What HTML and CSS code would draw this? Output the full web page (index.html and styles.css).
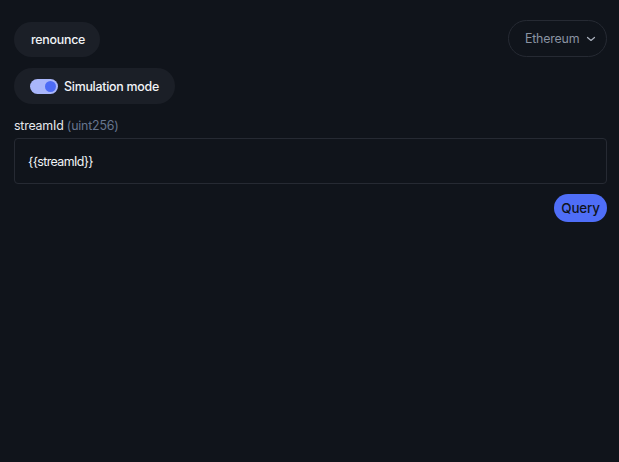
FILE: index.html
```html
<!DOCTYPE html>
<html>
<head>
<meta charset="utf-8">
<link rel="stylesheet" href="styles.css">
</head>
<body>
<div class="page">
  <div class="top">
    <div class="left">
      <button class="pill">renounce</button>
      <div class="pill sim">
        <span class="toggle"><span class="knob"></span></span>
        <span>Simulation mode</span>
      </div>
    </div>
    <button class="chain"><span>Ethereum</span>
      <svg width="10" height="10" viewBox="0 0 10 10"><path d="M1.5 3.5 L5 6.5 L8.5 3.5" fill="none" stroke="#aab1bd" stroke-width="1.2" stroke-linecap="round" stroke-linejoin="round"/></svg>
    </button>
  </div>
  <label class="label">streamId <span class="type">(uint256)</span></label>
  <div class="input">{{streamId}}</div>
  <div class="actions"><button class="query">Query</button></div>
</div>
</body>
</html>
```
FILE: styles.css
```css
html, body { margin: 0; padding: 0; background: #10141b; }
body { font-family: Inter, "Noto Sans", sans-serif; color: #f2f4f7; }
.page { padding: 20px 12px 0 14px; }
.top { display: flex; justify-content: space-between; align-items: flex-start; }
.left { display: flex; flex-direction: column; align-items: flex-start; gap: 11px; padding-top: 2px; }
.pill {
  background: #1b1f27; border: none; color: #f2f4f7; font-family: inherit;
  font-size: 12.4px; font-weight: 500; height: 35px; border-radius: 18px;
  padding: 0 15px 0 17px; display: flex; align-items: center; letter-spacing: -0.25px;
}
.sim { height: 36px; padding: 0 16px; gap: 6px; }
.toggle { width: 28px; height: 15px; border-radius: 8px; background: #a9b6fb; display: flex; align-items: center; justify-content: flex-end; padding-right: 2px; box-sizing: border-box; }
.knob { width: 11px; height: 11px; border-radius: 50%; background: #4d6bf6; }
.chain {
  height: 37px; width: 99px; background: transparent; border: 1px solid #262a33; border-radius: 19px;
  color: #8a93a2; font-family: inherit; font-size: 12.4px; font-weight: 400; display: flex; align-items: center;
  gap: 7px; padding: 0 0 0 16px; box-sizing: border-box; letter-spacing: -0.2px;
}
.label { display: block; font-size: 12.4px; margin-top: 14px; color: #e6e8ec; letter-spacing: -0.2px; }
.type { color: #66758f; }
.input {
  margin-top: 5px; height: 46px; border: 1px solid #262a33; border-radius: 4px; box-sizing: border-box;
  font-size: 12.4px; display: flex; align-items: center; padding-left: 13px; color: #f2f4f7; letter-spacing: -0.6px;
}
.actions { display: flex; justify-content: flex-end; margin-top: 10px; }
.query {
  background: #4f6ef7; color: #10141b; border: none; font-family: inherit; font-size: 13.4px; font-weight: 500;
  height: 28px; width: 53px; border-radius: 14px; padding: 0; letter-spacing: -0.2px;
}
```
